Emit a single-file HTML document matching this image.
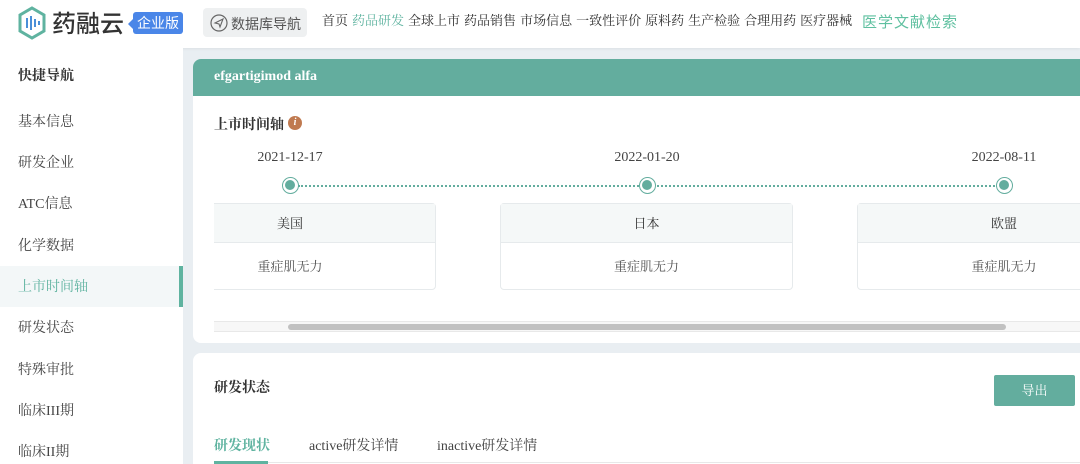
<!DOCTYPE html>
<html><head><meta charset="utf-8"><style>
*{margin:0;padding:0;box-sizing:border-box}
html,body{width:1080px;height:464px;overflow:hidden}
body{background:#e9eef2;font-family:"Liberation Serif","Noto Serif CJK SC",serif;color:#333;position:relative}
.hdr{position:absolute;left:0;top:0;width:1080px;height:48px;background:#fff;box-shadow:0 1px 3px rgba(0,0,0,.06)}
.abs{position:absolute;white-space:nowrap}
.side{position:absolute;left:0;top:48px;width:183px;height:416px;background:#fff}
.nav{position:absolute;left:18px;font-size:14px;color:#444}
.card{position:absolute;background:#fff;border-radius:8px}
.box{position:absolute;height:87px;border:1px solid #e6eaec;border-radius:4px;background:#fff;font-size:13px;color:#555;text-align:center}
.box .h{height:39px;line-height:39px;background:#f5f8f8;border-bottom:1px solid #e6eaec;color:#333}
.box .b{line-height:48px}
.date{position:absolute;top:150px;font-size:14px;color:#444;width:120px;text-align:center}
.dot{position:absolute;top:177px;width:17px;height:17px;border-radius:50%;border:1.5px solid #63ad9e;background:#fff}
.dot:after{content:"";position:absolute;left:2px;top:2px;width:10px;height:10px;border-radius:50%;background:#63ad9e}
.tn{position:absolute;left:322px;top:12px;font-size:13px;color:#333;line-height:18px;display:flex;gap:4px;white-space:nowrap}
</style></head><body>
<div class="hdr">
 <svg class="abs" style="left:17px;top:6px" width="30" height="34" viewBox="0 0 30 34"><path d="M15 2 L27 9 V25 L15 32 L3 25 V9 Z" fill="none" stroke="#5fb3a0" stroke-width="3"/><g stroke="#4a8fd8" stroke-width="2"><line x1="10" y1="12" x2="10" y2="22"/><line x1="14" y1="10" x2="14" y2="24"/><line x1="18" y1="13" x2="18" y2="21"/><line x1="22" y1="15" x2="22" y2="19"/></g></svg>
 <div class="abs" style="left:52px;top:7px;font-size:24px;font-family:'Noto Sans CJK SC',sans-serif;color:#333;font-weight:500;line-height:30px">药融云</div>
 <div class="abs" style="left:133px;top:12px;width:50px;height:22px;background:#4a86e8;border-radius:3px;color:#fff;font-size:14px;line-height:22px;text-align:center;font-family:'Noto Sans CJK SC',sans-serif">企业版</div>
 <div class="abs" style="left:128px;top:19px;width:0;height:0;border:5px solid transparent;border-right-color:#4a86e8;border-left:0"></div>
 <div class="abs" style="left:203px;top:8px;width:104px;height:29px;background:#eef0f1;border-radius:4px"></div>
 <svg class="abs" style="left:210px;top:14px" width="18" height="18" viewBox="0 0 18 18"><circle cx="9" cy="9" r="8" fill="none" stroke="#666" stroke-width="1.2"/><path d="M5 9 L13 5 L10 13 L9 10 Z" fill="none" stroke="#666" stroke-width="1.1"/></svg>
 <div class="abs" style="left:231px;top:14px;font-size:14px;color:#555;font-family:'Noto Sans CJK SC',sans-serif;line-height:20px">数据库导航</div>
 <div class="tn"><span>首页</span><span style="color:#5fb3a0">药品研发</span><span>全球上市</span><span>药品销售</span><span>市场信息</span><span>一致性评价</span><span>原料药</span><span>生产检验</span><span>合理用药</span><span>医疗器械</span></div>
 <div class="abs" style="left:862px;top:11px;font-size:15px;color:#5fc0a0;letter-spacing:1px;font-family:'Noto Sans CJK SC',sans-serif;line-height:22px">医学文献检索</div>
</div>
<div class="side">
 <div class="nav" style="top:17px;font-weight:bold;color:#333">快捷导航</div>
 <div class="nav" style="top:63px">基本信息</div>
 <div class="nav" style="top:104px">研发企业</div>
 <div class="nav" style="top:145px">ATC信息</div>
 <div class="nav" style="top:187px">化学数据</div>
 <div class="abs" style="left:0;top:218px;width:183px;height:41px;background:#f3f7f8"></div>
 <div class="abs" style="left:179px;top:218px;width:4px;height:41px;background:#5fb3a0"></div>
 <div class="nav" style="top:228px;color:#5fb3a0">上市时间轴</div>
 <div class="nav" style="top:269px">研发状态</div>
 <div class="nav" style="top:311px">特殊审批</div>
 <div class="nav" style="top:352px">临床III期</div>
 <div class="nav" style="top:393px">临床II期</div>
</div>
<div class="card" style="left:193px;top:59px;width:900px;height:284px;overflow:hidden">
 <div style="height:37px;background:#63ad9e;color:#fff;font-weight:bold;font-size:14px;line-height:36px;padding-left:21px">efgartigimod alfa</div>
</div>
<div class="abs" style="left:214px;top:114px;font-size:14px;font-weight:bold;color:#333">上市时间轴</div>
<div class="abs" style="left:288px;top:116px;width:14px;height:14px;border-radius:50%;background:#c07a50;color:#fff;font-size:10px;font-style:italic;text-align:center;line-height:14px;font-weight:bold">i</div>
<div class="date" style="left:230px">2021-12-17</div>
<div class="date" style="left:587px">2022-01-20</div>
<div class="date" style="left:944px">2022-08-11</div>
<div class="abs" style="left:298px;top:185px;width:700px;border-top:2px dotted #63ad9e"></div>
<div class="dot" style="left:282px"></div>
<div class="dot" style="left:639px"></div>
<div class="dot" style="left:996px"></div>
<div style="position:absolute;left:214px;top:200px;width:866px;height:100px;overflow:hidden">
 <div class="box" style="left:-70px;top:3px;width:292px"><div class="h">美国</div><div class="b">重症肌无力</div></div>
 <div class="box" style="left:286px;top:3px;width:293px"><div class="h">日本</div><div class="b">重症肌无力</div></div>
 <div class="box" style="left:643px;top:3px;width:294px"><div class="h">欧盟</div><div class="b">重症肌无力</div></div>
</div>
<div class="abs" style="left:214px;top:321px;width:866px;height:11px;background:#f7f7f7;border-top:1px solid #e8e8e8;border-bottom:1px solid #e8e8e8"></div>
<div class="abs" style="left:288px;top:324px;width:718px;height:6px;background:#c1c1c1;border-radius:3px"></div>
<div class="card" style="left:193px;top:353px;width:900px;height:111px;border-radius:8px 8px 0 0"></div>
<div class="abs" style="left:214px;top:377px;font-size:14px;font-weight:bold;color:#333">研发状态</div>
<div class="abs" style="left:994px;top:375px;width:81px;height:31px;background:#63ad9e;border-radius:2px;color:#fff;font-size:13px;text-align:center;line-height:31px">导出</div>
<div class="abs" style="left:214px;top:435px;font-size:14px;font-weight:bold;color:#5fb3a0">研发现状</div>
<div class="abs" style="left:309px;top:435px;font-size:14px;color:#444">active研发详情</div>
<div class="abs" style="left:437px;top:435px;font-size:14px;color:#444">inactive研发详情</div>
<div class="abs" style="left:214px;top:462px;width:866px;height:1px;background:#e8e8e8"></div>
<div class="abs" style="left:214px;top:461px;width:54px;height:3px;background:#5fb3a0"></div>
</body></html>
